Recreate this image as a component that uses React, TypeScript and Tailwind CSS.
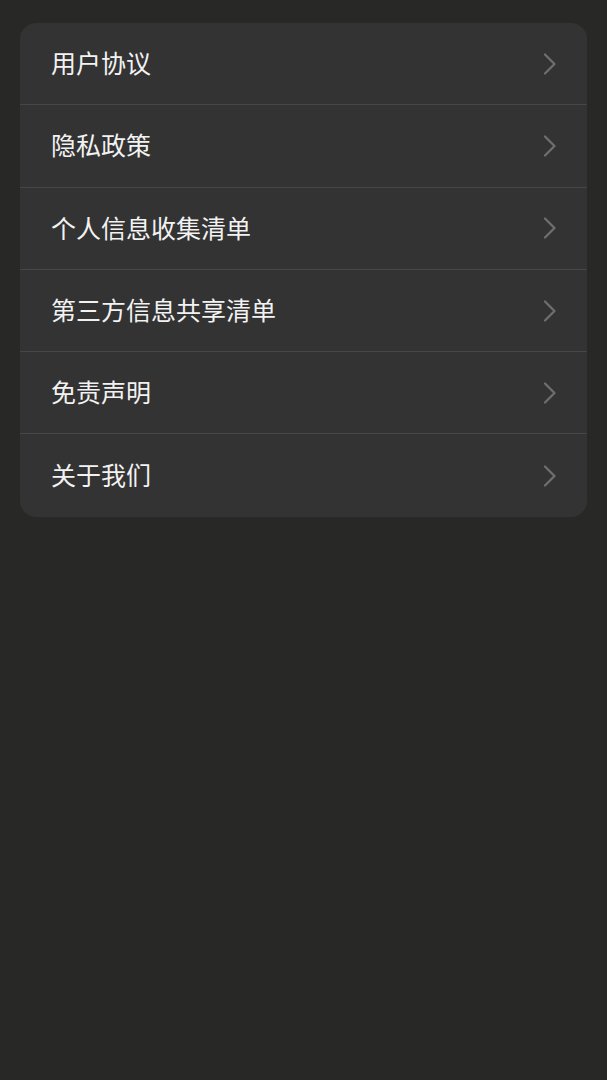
import React from "react";

const items = ["用户协议", "隐私政策", "个人信息收集清单", "第三方信息共享清单", "免责声明", "关于我们"];

export default function App() {
  return (
    <div
      className="min-h-[1080px] w-full bg-[#282826] px-[20px] pt-[23px]"
      style={{ fontFamily: '"Noto Sans CJK SC", "Noto Sans", sans-serif' }}
    >
      <div className="overflow-hidden rounded-[16px] bg-[#333333]">
        {items.map((t, i) => (
          <div
            key={t}
            className={`flex h-[82.3px] items-center justify-between pl-[31px] pr-[30px] ${
              i < items.length - 1 ? "border-b border-[#464646]" : ""
            }`}
          >
            <span className="-mt-[2px] text-[25px] leading-none text-[#f2f2f2]">{t}</span>
            <svg width="14" height="22" viewBox="0 0 14 22" fill="none">
              <path d="M2 1.5 L11.5 11 L2 20.5" stroke="#6f6f6f" strokeWidth="2.2" strokeLinecap="round" strokeLinejoin="round" />
            </svg>
          </div>
        ))}
      </div>
    </div>
  );
}
